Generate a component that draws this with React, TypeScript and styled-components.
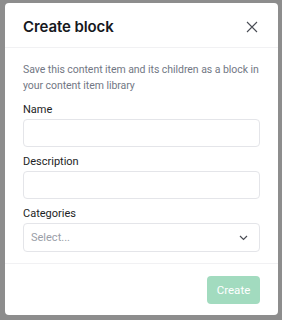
import React from "react";
import { styled, createGlobalStyle } from "styled-components";

const GlobalStyle = createGlobalStyle`
  html, body {
    margin: 0;
    padding: 0;
    background: #8d8d8d;
    font-family: "Roboto", "Liberation Sans", sans-serif;
  }
`;

const Backdrop = styled.div`
  width: 282px;
  height: 320px;
  box-sizing: border-box;
  padding: 3px 4px 5px 5px;
`;

const Modal = styled.div`
  background: #ffffff;
  border-radius: 4px;
  height: 100%;
  display: flex;
  flex-direction: column;
  overflow: hidden;
`;

const Header = styled.div`
  display: flex;
  align-items: center;
  justify-content: space-between;
  height: 45px;
  padding: 3px 18px 0 18px;
  box-sizing: border-box;
  border-bottom: 1px solid #f1f1f3;
`;

const Title = styled.h2`
  margin: 0;
  font-family: "Inter", "Liberation Sans", sans-serif;
  font-size: 15px;
  font-weight: 600;
  color: #16181d;
  letter-spacing: -0.1px;
`;

const CloseButton = styled.button`
  border: none;
  background: none;
  padding: 0;
  width: 14px;
  height: 14px;
  display: flex;
  color: #4a4d55;
  margin-right: 1px;
`;

const Body = styled.div`
  padding: 14px 18px 11px 18px;
  display: flex;
  flex-direction: column;
  border-bottom: 1px solid #f1f1f3;
`;

const Intro = styled.p`
  margin: 0 0 8px 0;
  font-size: 10.5px;
  line-height: 16px;
  letter-spacing: -0.05px;
  color: #727784;
`;

const Field = styled.div`
  display: flex;
  flex-direction: column;
  gap: 1px;
  & + & {
    margin-top: 7px;
  }
`;

const Label = styled.label`
  font-size: 11px;
  line-height: 16px;
  color: #1c1e24;
`;

const Input = styled.div`
  height: 28px;
  box-sizing: border-box;
  border: 1px solid #e4e5e9;
  border-radius: 4px;
  background: #fff;
`;

const Select = styled(Input)`
  height: 29px;
  display: flex;
  align-items: center;
  justify-content: space-between;
  padding: 0 11px 0 7px;
  font-size: 11px;
  color: #9a9ea8;
`;

const Footer = styled.div`
  flex: 1;
  display: flex;
  justify-content: flex-end;
  align-items: flex-start;
  padding: 12px 18px 0 18px;
`;

const PrimaryButton = styled.button`
  height: 28px;
  width: 53px;
  padding: 0;
  border: none;
  border-radius: 4px;
  background: #a2dbbf;
  color: #ffffff;
  font-family: inherit;
  font-size: 11.5px;
`;

const App = () => (
  <>
    <GlobalStyle />
    <Backdrop>
      <Modal>
        <Header>
          <Title>Create block</Title>
          <CloseButton aria-label="Close">
            <svg width="14" height="14" viewBox="0 0 14 14" fill="none">
              <path d="M2 2 L12 12 M12 2 L2 12" stroke="currentColor" strokeWidth="1.1" />
            </svg>
          </CloseButton>
        </Header>
        <Body>
          <Intro>
            Save this content item and its children as a block in your content item library
          </Intro>
          <Field>
            <Label>Name</Label>
            <Input />
          </Field>
          <Field>
            <Label>Description</Label>
            <Input />
          </Field>
          <Field>
            <Label>Categories</Label>
            <Select>
              <span>Select...</span>
              <svg width="9" height="6" viewBox="0 0 9 6" fill="none">
                <path d="M1 1 L4.5 4.5 L8 1" stroke="#4a4d55" strokeWidth="1.2" />
              </svg>
            </Select>
          </Field>
        </Body>
        <Footer>
          <PrimaryButton>Create</PrimaryButton>
        </Footer>
      </Modal>
    </Backdrop>
  </>
);

export default App;
